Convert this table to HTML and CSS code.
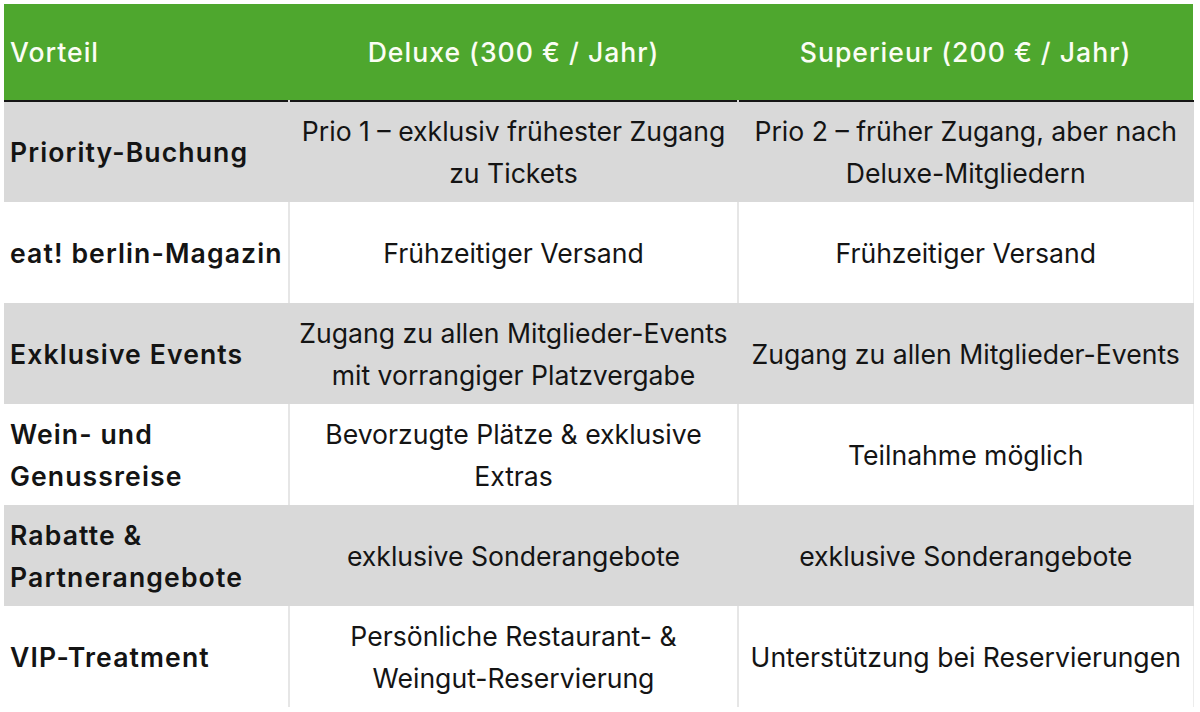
FILE: index.html
```html
<!DOCTYPE html>
<html lang="de">
<head>
<meta charset="utf-8">
<title>Mitgliedschaft Vorteile</title>
<link rel="stylesheet" href="styles.css">
</head>
<body>
<table class="compare">
  <colgroup>
    <col class="col-benefit">
    <col class="col-deluxe">
    <col class="col-superieur">
  </colgroup>
  <thead>
    <tr class="head-row">
      <th class="head-cell head-left">Vorteil</th>
      <th class="head-cell">Deluxe (300 € / Jahr)</th>
      <th class="head-cell">Superieur (200 € / Jahr)</th>
    </tr>
  </thead>
  <tbody>
    <tr class="row shaded">
      <td class="benefit">Priority-Buchung</td>
      <td class="value">Prio 1 – exklusiv frühester Zugang<br>zu Tickets</td>
      <td class="value">Prio 2 – früher Zugang, aber nach<br>Deluxe-Mitgliedern</td>
    </tr>
    <tr class="row">
      <td class="benefit">eat! berlin-Magazin</td>
      <td class="value">Frühzeitiger Versand</td>
      <td class="value">Frühzeitiger Versand</td>
    </tr>
    <tr class="row shaded">
      <td class="benefit">Exklusive Events</td>
      <td class="value">Zugang zu allen Mitglieder-Events<br>mit vorrangiger Platzvergabe</td>
      <td class="value">Zugang zu allen Mitglieder-Events</td>
    </tr>
    <tr class="row">
      <td class="benefit">Wein- und<br>Genussreise</td>
      <td class="value">Bevorzugte Plätze &amp; exklusive<br>Extras</td>
      <td class="value">Teilnahme möglich</td>
    </tr>
    <tr class="row shaded">
      <td class="benefit">Rabatte &amp;<br>Partnerangebote</td>
      <td class="value">exklusive Sonderangebote</td>
      <td class="value">exklusive Sonderangebote</td>
    </tr>
    <tr class="row">
      <td class="benefit">VIP-Treatment</td>
      <td class="value">Persönliche Restaurant- &amp;<br>Weingut-Reservierung</td>
      <td class="value">Unterstützung bei Reservierungen</td>
    </tr>
  </tbody>
</table>
</body>
</html>
```
FILE: styles.css
```css
html, body {
  margin: 0;
  padding: 0;
  background: #ffffff;
}

body {
  padding: 4px 0 0 4px;
  font-family: "Inter", "Noto Sans", sans-serif;
  color: #141414;
}

.compare {
  border-collapse: collapse;
  table-layout: fixed;
  width: 1189px;
}

.col-benefit { width: 285px; }
.col-deluxe { width: 449px; }
.col-superieur { width: 455px; }

.head-row {
  height: 97px;
  background: #4ea72e;
  border-bottom: 2px solid #161616;
}

.head-cell {
  padding: 0 6px;
  font-size: 26.6px;
  font-weight: 500;
  letter-spacing: 1px;
  color: #fbfdf4;
  text-align: center;
  vertical-align: middle;
}

.head-left {
  text-align: left;
  padding-left: 6px;
}

.row {
  height: 101px;
}

.row td {
  padding: 0 6px;
  font-size: 26.6px;
  line-height: 42px;
  vertical-align: middle;
  border-left: 2px solid #e6e6e6;
  border-right: 1px solid #ececec;
}

.row td:first-child {
  border-left: none;
}

.row.shaded {
  background: #d9d9d9;
}

.row.shaded td {
  border-left-color: #d9d9d9;
  border-right-color: #d9d9d9;
}

.benefit {
  font-weight: 600;
  letter-spacing: 1.1px;
  white-space: nowrap;
  text-align: left;
}

.value {
  font-weight: 400;
  text-align: center;
}
```
